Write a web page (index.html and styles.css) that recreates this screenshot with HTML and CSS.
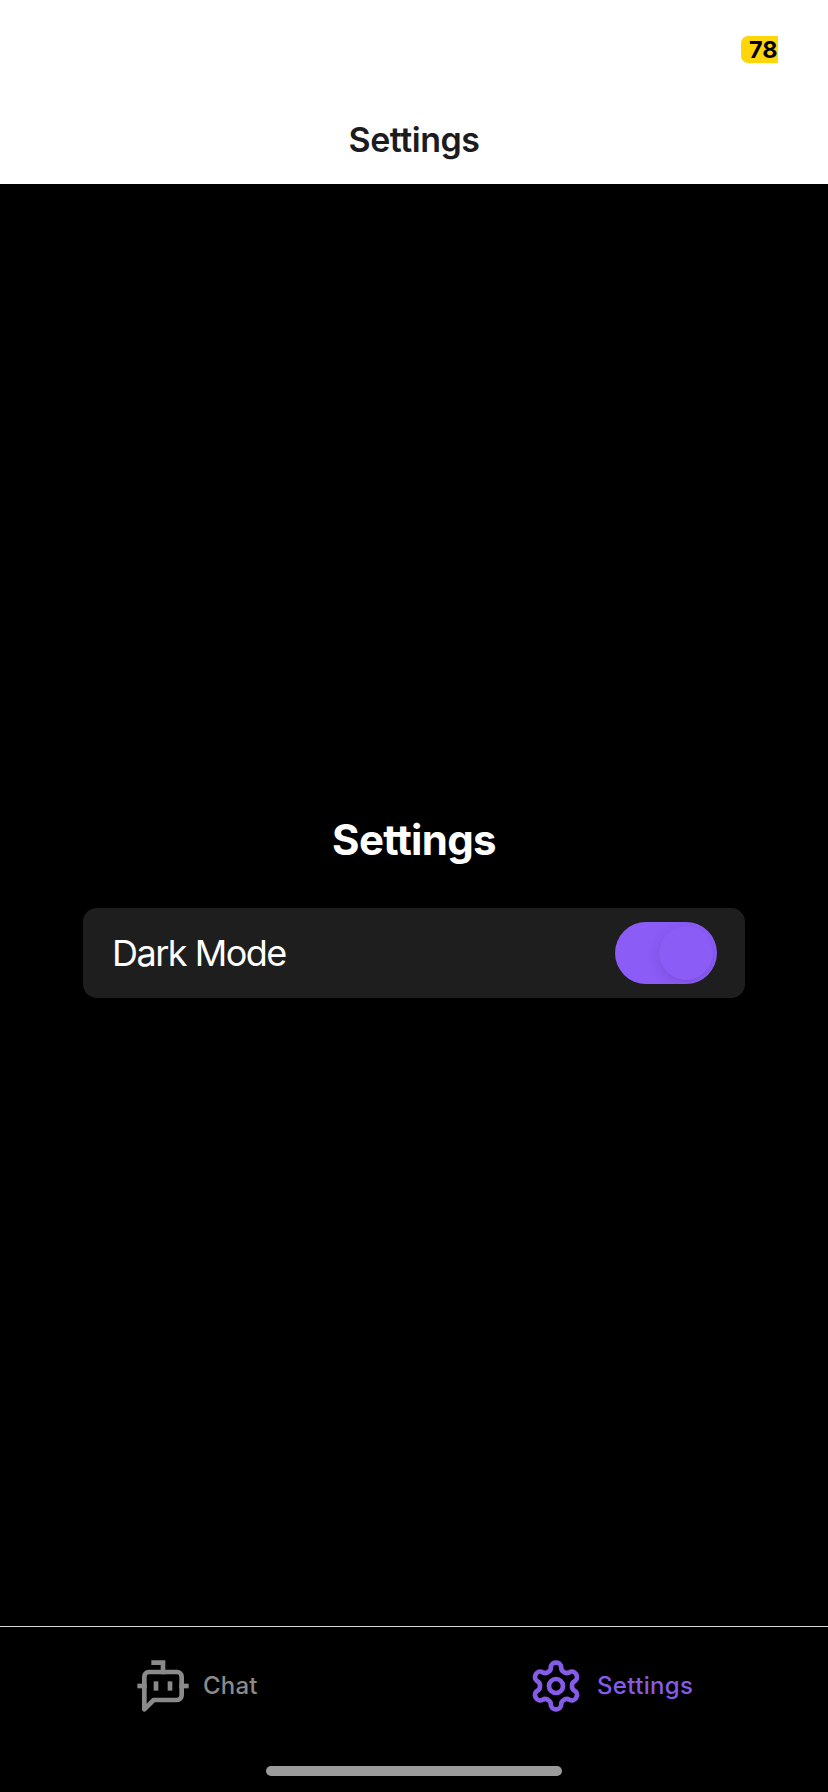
FILE: index.html
```html
<!DOCTYPE html>
<html lang="en">
<head>
<meta charset="utf-8">
<title>Settings</title>
<link rel="stylesheet" href="styles.css">
</head>
<body>
<div class="app">
  <header class="header">
    <div class="status"><span class="battery">78</span></div>
    <div class="header-title">Settings</div>
  </header>
  <main class="content">
    <h1 class="heading">Settings</h1>
    <div class="card">
      <span class="card-label">Dark Mode</span>
      <div class="switch" role="switch" aria-checked="true"><span class="thumb"></span></div>
    </div>
  </main>
  <nav class="tabs">
    <div class="tab tab-chat">
      <svg class="icon icon-bot" viewBox="0 0 24 24"><path d="M12 6V2H8"/><path class="bubble" d="m8 18-4 4V8a2 2 0 0 1 2-2h12a2 2 0 0 1 2 2v8a2 2 0 0 1-2 2Z"/><path d="M2 12h2"/><path d="M9 11v2"/><path d="M15 11v2"/><path d="M20 12h2"/></svg>
      <span class="tab-label">Chat</span>
    </div>
    <div class="tab tab-settings">
      <svg class="icon" viewBox="0 0 24 24"><path d="M12.22 2h-.44a2 2 0 0 0-2 2v.18a2 2 0 0 1-1 1.73l-.43.25a2 2 0 0 1-2 0l-.15-.08a2 2 0 0 0-2.73.73l-.22.38a2 2 0 0 0 .73 2.73l.15.1a2 2 0 0 1 1 1.72v.51a2 2 0 0 1-1 1.74l-.15.09a2 2 0 0 0-.73 2.73l.22.38a2 2 0 0 0 2.73.73l.15-.08a2 2 0 0 1 2 0l.43.25a2 2 0 0 1 1 1.73V20a2 2 0 0 0 2 2h.44a2 2 0 0 0 2-2v-.18a2 2 0 0 1 1-1.73l.43-.25a2 2 0 0 1 2 0l.15.08a2 2 0 0 0 2.73-.73l.22-.39a2 2 0 0 0-.73-2.73l-.15-.08a2 2 0 0 1-1-1.74v-.5a2 2 0 0 1 1-1.74l.15-.09a2 2 0 0 0 .73-2.73l-.22-.38a2 2 0 0 0-2.73-.73l-.15.08a2 2 0 0 1-2 0l-.43-.25a2 2 0 0 1-1-1.73V4a2 2 0 0 0-2-2z"/><circle cx="12" cy="12" r="3"/></svg>
      <span class="tab-label">Settings</span>
    </div>
    <div class="home-bar"></div>
  </nav>
</div>
</body>
</html>
```
FILE: styles.css
```css
* { box-sizing: border-box; }
body { margin: 0; background: #000; font-family: Inter, "Liberation Sans", sans-serif; }
.app { display: flex; flex-direction: column; width: 828px; height: 1792px; overflow: hidden; }
.header { height: 184px; background: #fff; }
.status { display: flex; justify-content: flex-end; height: 96px; padding: 36px 50px 0 0; }
.battery { width: 37px; height: 27px; padding-left: 8px; border-radius: 7px 0 0 7px; background: #ffd60a; color: #000; font-size: 23.5px; font-weight: 700; line-height: 27px; letter-spacing: 0; overflow: hidden; }
.header-title { height: 88px; line-height: 88px; text-align: center; font-size: 34px; font-weight: 600; letter-spacing: -0.5px; color: #1c1c1e; }
.content { flex: 1; display: flex; flex-direction: column; align-items: center; padding-top: 629px; }
.heading { margin: 0; height: 54px; line-height: 54px; font-size: 42px; font-weight: 700; letter-spacing: -0.7px; color: #fff; }
.card { display: flex; align-items: center; justify-content: space-between; width: 662px; height: 90px; margin-top: 41px; padding: 0 28px; border-radius: 14px; background: #1e1e1e; }
.card-label { margin-left: 1px; font-size: 36px; line-height: 44px; letter-spacing: -1.5px; color: #fff; }
.switch { display: flex; align-items: center; justify-content: flex-end; width: 102px; height: 62px; padding-right: 4px; border-radius: 31px; background: #8b5cf6; overflow: hidden; }
.thumb { width: 54px; height: 54px; border-radius: 50%; background: #8b5cf6; box-shadow: 0 4px 14px rgba(0, 0, 0, .1), 0 1px 2px rgba(0, 0, 0, .04); }
.tabs { display: grid; grid-template-columns: 1fr 1fr; grid-template-rows: 118px 1fr; height: 166px; border-top: 1px solid #d8d8d8; }
.tab { display: flex; align-items: center; }
.tab-chat { padding-left: 135px; color: #8a8a8b; }
.tab-settings { padding-left: 114px; color: #865be8; }
.icon { width: 56px; height: 56px; flex: none; fill: none; stroke: currentColor; stroke-width: 2; stroke-linecap: round; stroke-linejoin: round; }
.icon-bot { stroke-linecap: square; stroke-linejoin: miter; }
.bubble { stroke-linejoin: round; }
.tab-label { margin-left: 12px; font-size: 24px; line-height: 30px; font-weight: 500; letter-spacing: 0.2px; }
.tab-settings .tab-label { margin-left: 13px; letter-spacing: 0.35px; }
.home-bar { grid-column: 1 / -1; justify-self: center; width: 296px; height: 10px; margin-top: 21px; border-radius: 5px; background: #9b9b9b; }
```
